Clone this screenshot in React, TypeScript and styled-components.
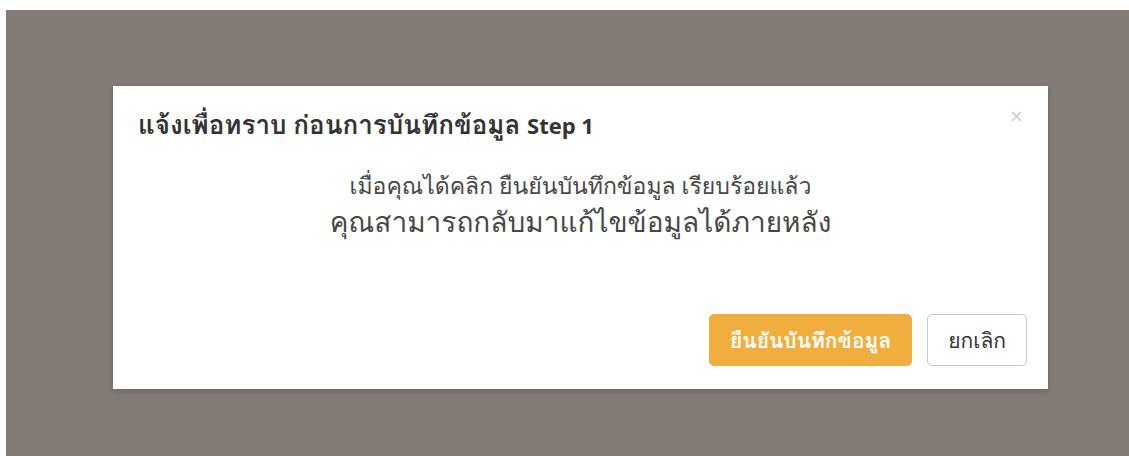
import styled, { createGlobalStyle } from "styled-components";

const Global = createGlobalStyle`
    html, body { margin: 0; padding: 0; background: #ffffff; }
    body { font-family: "Open Sans", Loma, "Noto Sans Thai Looped", sans-serif; }
    * { box-sizing: border-box; }
`

const Page = styled.div`
    width: 1129px;
    height: 456px;
    padding: 10px 0 0 6px;
    background: #ffffff;
`

const Backdrop = styled.div`
    height: 100%;
    background: #847b76;
    padding: 76px 0 0 107px;
`

const Dialog = styled.div`
    width: 935px;
    height: 303px;
    background: #ffffff;
    box-shadow: 0 2px 6px rgba(0,0,0,.2);
    display: flex;
    flex-direction: column;
`

const Header = styled.div`
    position: relative;
    padding: 20px 60px 0 25px;
    > h4 {
        margin: 0;
        font-size: 26px;
        line-height: 36px;
        font-weight: 700;
        color: #333333;
    }
`

// latin part of the title sits smaller than the thai text
const Latin = styled.span`
    font-size: 22px;
`

const Close = styled.button`
    position: absolute;
    top: 20px;
    right: 24px;
    border: 0;
    background: none;
    padding: 0;
    font-family: "DejaVu Sans", sans-serif;
    font-size: 18px;
    line-height: 20px;
    color: #cfcfcf;
    cursor: pointer;
`

const Body = styled.div`
    flex: 1;
    padding-top: 24px;
    text-align: center;
    color: #474747;
`

const Line = styled.div<{ $size: number }>`
    font-size: ${p => p.$size}px;
    line-height: 36px;
`

const Footer = styled.div`
    display: flex;
    justify-content: flex-end;
    gap: 15px;
    padding: 0 21px 23px 0;
`

const Button = styled.button<{ $primary?: boolean }>`
    height: 52px;
    padding: 0 20px;
    border-radius: 5px;
    font-family: inherit;
    font-size: 21px;
    font-weight: ${p => p.$primary ? 700 : 400};
    cursor: pointer;
    border: 1px solid ${p => p.$primary ? '#f0ae3f' : '#c8c8c8'};
    background: ${p => p.$primary ? '#f0ae3f' : '#ffffff'};
    color: ${p => p.$primary ? '#ffffff' : '#333333'};
`

export default function App(){
    return <Page>
        <Global/>
        <Backdrop>
            <Dialog>
                <Header>
                    <h4>แจ้งเพื่อทราบ ก่อนการบันทึกข้อมูล <Latin>Step 1</Latin></h4>
                    <Close>×</Close>
                </Header>
                <Body>
                    <Line $size={23}>เมื่อคุณได้คลิก ยืนยันบันทึกข้อมูล เรียบร้อยแล้ว</Line>
                    <Line $size={28}>คุณสามารถกลับมาแก้ไขข้อมูลได้ภายหลัง</Line>
                </Body>
                <Footer>
                    <Button $primary>ยืนยันบันทึกข้อมูล</Button>
                    <Button>ยกเลิก</Button>
                </Footer>
            </Dialog>
        </Backdrop>
    </Page>
}
